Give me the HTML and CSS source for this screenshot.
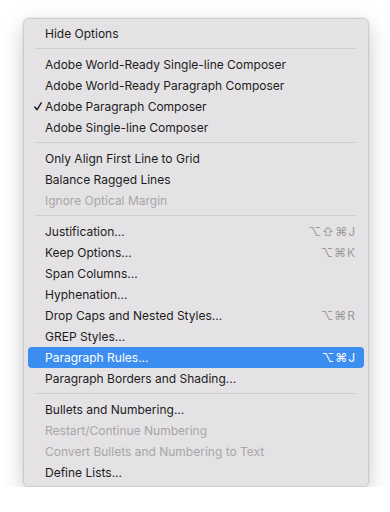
FILE: index.html
```html
<!DOCTYPE html>
<html lang="en">
<head>
    <meta charset="UTF-8">
    <meta name="viewport" content="width=device-width, initial-scale=1.0">
    <title>Paragraph Panel Menu</title>
    <link rel="stylesheet" href="styles.css">
</head>
<body>
    <div class="menu">
        <div class="item">Hide Options</div>
        <div class="sep"></div>
        <div class="item">Adobe World-Ready Single-line Composer</div>
        <div class="item">Adobe World-Ready Paragraph Composer</div>
        <div class="item">
            <svg class="check" width="8" height="9" viewBox="0 0 8 9"><polyline points="0.8,5 3,7.8 7.2,0.8" fill="none" stroke="#1f1f1f" stroke-width="1.4" stroke-linecap="round" stroke-linejoin="round"/></svg>
            Adobe Paragraph Composer
        </div>
        <div class="item">Adobe Single-line Composer</div>
        <div class="sep"></div>
        <div class="item">Only Align First Line to Grid</div>
        <div class="item">Balance Ragged Lines</div>
        <div class="item disabled">Ignore Optical Margin</div>
        <div class="sep"></div>
        <div class="item">Justification...<span class="key">&#8997;&#8679;&#8984;J</span></div>
        <div class="item">Keep Options...<span class="key">&#8997;&#8984;K</span></div>
        <div class="item">Span Columns...</div>
        <div class="item">Hyphenation...</div>
        <div class="item">Drop Caps and Nested Styles...<span class="key">&#8997;&#8984;R</span></div>
        <div class="item">GREP Styles...</div>
        <div class="item active">Paragraph Rules...<span class="key">&#8997;&#8984;J</span></div>
        <div class="item">Paragraph Borders and Shading...</div>
        <div class="sep"></div>
        <div class="item">Bullets and Numbering...</div>
        <div class="item disabled">Restart/Continue Numbering</div>
        <div class="item disabled">Convert Bullets and Numbering to Text</div>
        <div class="item">Define Lists...</div>
    </div>
</body>
</html>
```

FILE: styles.css
```css
body {
    margin: 0;
    padding: 18px 0 0 23px;
    background-color: #fff;
    font-family: Inter, "Noto Sans", "DejaVu Sans", sans-serif;
    font-size: 12px;
}
.menu {
    box-sizing: border-box;
    width: 346px;
    padding: 4px 4px 3px 4px;
    background-color: #e4e2e4;
    border: 1px solid #cdcbcd;
    border-radius: 6px;
    box-shadow: 0 8px 22px rgba(0, 0, 0, 0.2), 0 0 3px rgba(0, 0, 0, 0.1);
}
.item {
    display: flex;
    align-items: center;
    height: 21px;
    padding: 0 8px 0 17px;
    border-radius: 4px;
    color: #1c1c1c;
    position: relative;
    white-space: nowrap;
}
.check {
    position: absolute;
    left: 6px;
    top: 6px;
}
.key {
    margin-left: auto;
    color: #9c9a9c;
    letter-spacing: 1px;
}
.disabled {
    color: #a8a6a8;
}
.active {
    background-color: #3b8ef0;
    color: #fff;
}
.active .key {
    color: #fff;
}
.sep {
    height: 1px;
    margin: 4px 8px 5px 7px;
    background-color: #cfcdcf;
}
```
